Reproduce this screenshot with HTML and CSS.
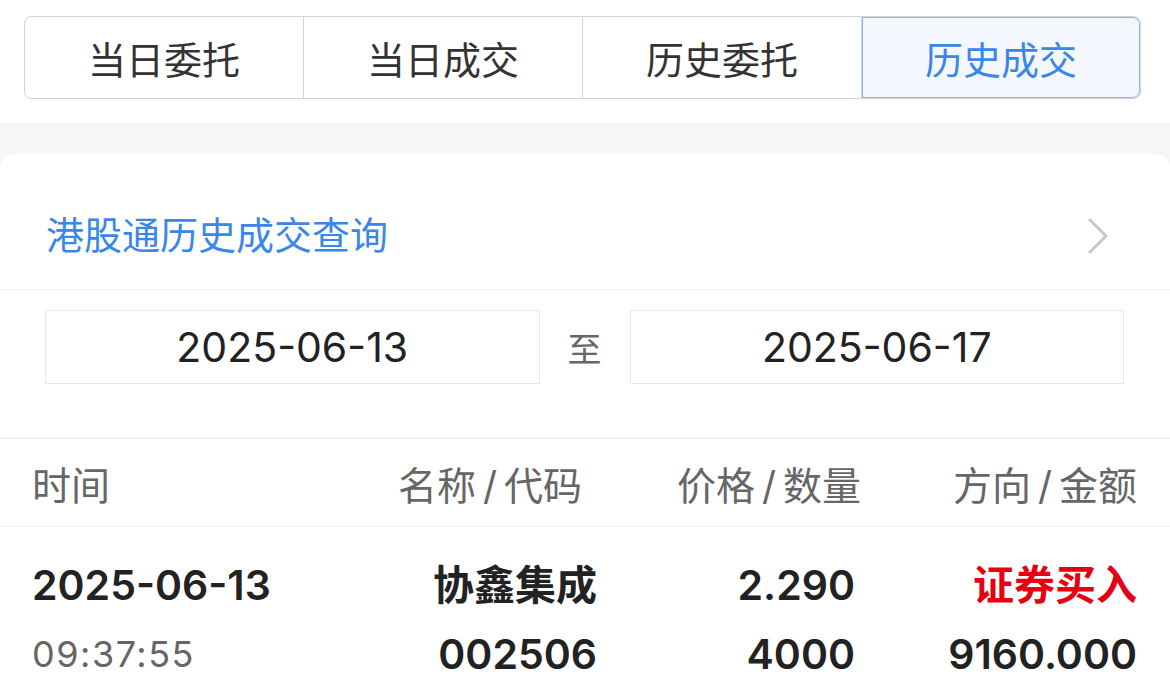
FILE: index.html
```html
<!DOCTYPE html>
<html>
<head>
	<meta charset="utf-8">
	<title>历史成交</title>
	<link rel="stylesheet" href="styles.css">
</head>
<body>
	<div class="top">
		<div class="tabs">
			<div class="tab">当日委托</div>
			<div class="tab">当日成交</div>
			<div class="tab">历史委托</div>
			<div class="tab active">历史成交</div>
		</div>
	</div>
	<div class="card">
		<div class="query">
			<span class="query-title">港股通历史成交查询</span>
			<svg class="chevron" width="24" height="38" viewBox="0 0 24 38">
				<polyline points="3,2 20,19 3,36" fill="none" stroke="#c8c8cc" stroke-width="3"/>
			</svg>
		</div>
		<div class="dates">
			<div class="date-box">2025-06-13</div>
			<div class="date-sep">至</div>
			<div class="date-box">2025-06-17</div>
		</div>
		<div class="grid head">
			<div class="cell left">时间</div>
			<div class="cell name-h">名称<span class="slash">/</span>代码</div>
			<div class="cell">价格<span class="slash">/</span>数量</div>
			<div class="cell">方向<span class="slash">/</span>金额</div>
		</div>
		<div class="grid row">
			<div class="cell left">
				<div class="main">2025-06-13</div>
				<div class="sub">09:37:55</div>
			</div>
			<div class="cell">
				<div class="main">协鑫集成</div>
				<div class="main">002506</div>
			</div>
			<div class="cell price">
				<div class="main">2.290</div>
				<div class="main">4000</div>
			</div>
			<div class="cell">
				<div class="main buy">证券买入</div>
				<div class="main">9160.000</div>
			</div>
		</div>
	</div>
</body>
</html>
```

FILE: styles.css
```css
body {
	margin: 0;
	background-color: #f5f6f8;
	font-family: Inter, "Noto Sans CJK SC", sans-serif;
	color: #222;
}
.top {
	background-color: #fff;
	padding: 16px 29px 24px 24px;
}
.tabs {
	display: flex;
	height: 81px;
	border: 1px solid #d3d5da;
	border-radius: 7px;
	overflow: hidden;
}
.tab {
	flex: 1;
	display: flex;
	align-items: center;
	justify-content: center;
	font-size: 38px;
	color: #333;
	border-left: 1px solid #d3d5da;
}
.tab:first-child {
	border-left: none;
}
.tab.active {
	color: #3a87e8;
	background-color: #f4f8fe;
	border-radius: 0 7px 7px 0;
	box-shadow: inset 0 0 0 1px #8db7ee;
}
.card {
	margin-top: 31px;
	background-color: #fff;
	border-radius: 14px 14px 0 0;
	height: 540px;
}
.query {
	display: flex;
	align-items: center;
	justify-content: space-between;
	padding: 62px 60px 34px 46px;
	border-bottom: 1px solid #eeeeee;
}
.query-title {
	font-size: 38px;
	line-height: 39px;
	color: #3a87e8;
}
.chevron {
	display: block;
}
.dates {
	display: flex;
	align-items: center;
	padding: 20px 46px 53px 45px;
	border-bottom: 2px solid #efefef;
}
.date-box {
	flex: 1;
	height: 72px;
	border: 1px solid #e8e8e8;
	display: flex;
	align-items: center;
	justify-content: center;
	font-size: 41px;
	color: #222;
}
.date-sep {
	width: 90px;
	text-align: center;
	font-size: 34px;
	color: #666;
}
.grid {
	display: grid;
	grid-template-columns: 300px 265px 264px 1fr;
	padding: 0 33px 0 32px;
}
.head {
	height: 87px;
	align-items: center;
	border-bottom: 1px solid #eeeeee;
	font-size: 39px;
	color: #666;
}
.slash {
	margin: 0 7px;
}
.cell {
	text-align: right;
}
.cell.left {
	text-align: left;
}
.name-h {
	padding-right: 15px;
}
.row {
	padding-top: 24px;
}
.main {
	font-size: 41px;
	font-weight: 600;
	line-height: 69px;
	color: #222;
}
.sub {
	font-size: 36px;
	letter-spacing: 1.5px;
	line-height: 69px;
	color: #666;
}
.price {
	padding-right: 6px;
}
.buy {
	color: #e60012;
}
```
